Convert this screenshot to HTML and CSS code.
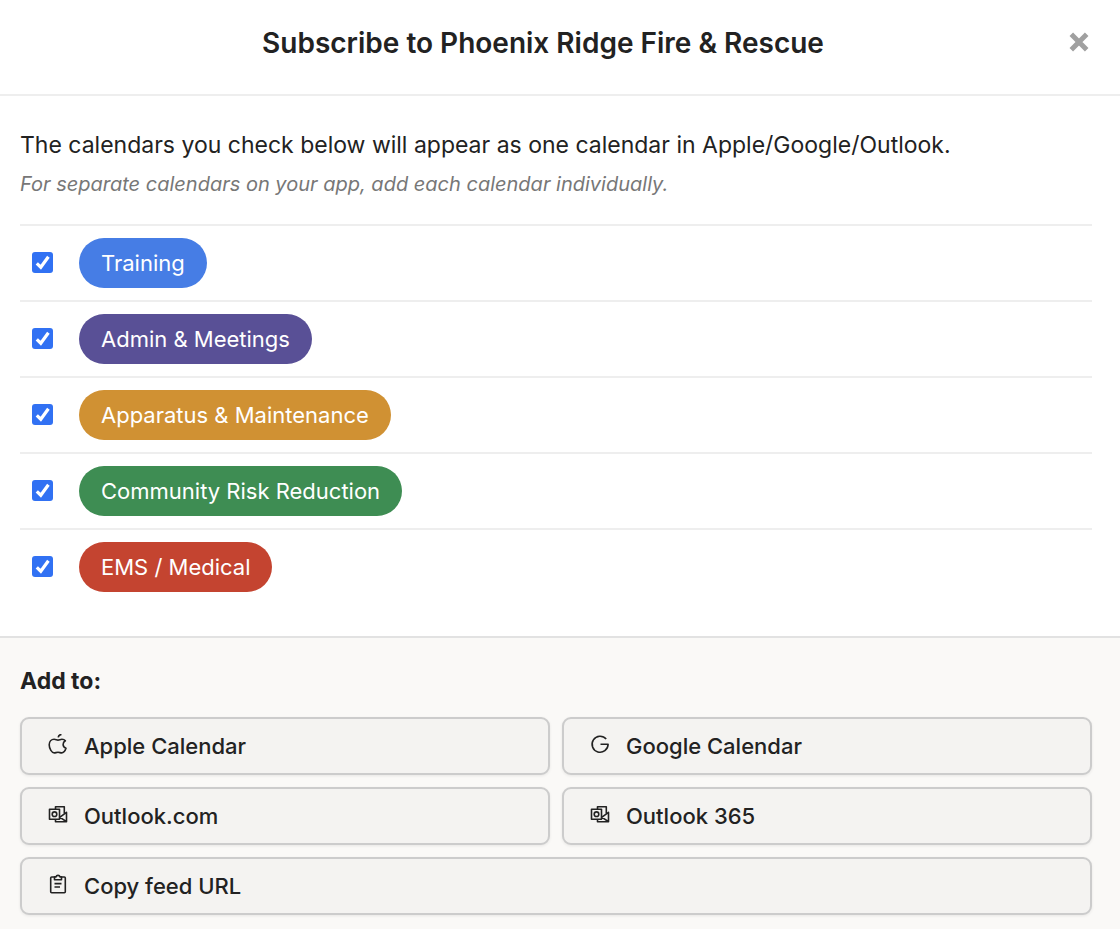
FILE: index.html
```html
<!DOCTYPE html>
<html lang="en">
<head>
    <meta charset="UTF-8">
    <meta name="viewport" content="width=device-width, initial-scale=1">
    <title>Subscribe to Phoenix Ridge Fire &amp; Rescue</title>
    <link rel="stylesheet" href="styles.css">
</head>
<body>
    <div class="dialog" role="dialog" aria-labelledby="dialog-title">
        <header class="dialog-header">
            <h1 class="dialog-title" id="dialog-title">Subscribe to Phoenix Ridge Fire &amp; Rescue</h1>
            <button class="close-button" type="button" aria-label="Close">
                <svg width="20" height="20" viewBox="0 0 20 20" fill="none" stroke="currentColor" stroke-width="5">
                    <path d="M2.3 2.3 17.7 17.7M17.7 2.3 2.3 17.7"/>
                </svg>
            </button>
        </header>

        <main class="dialog-body">
            <p class="intro">The calendars you check below will appear as one calendar in Apple/Google/Outlook.</p>
            <p class="hint">For separate calendars on your app, add each calendar individually.</p>

            <ul class="calendar-list">
                <li class="calendar-row">
                    <input class="calendar-check" type="checkbox" id="cal-training" checked>
                    <label class="pill training" for="cal-training">Training</label>
                </li>
                <li class="calendar-row">
                    <input class="calendar-check" type="checkbox" id="cal-admin" checked>
                    <label class="pill admin" for="cal-admin">Admin &amp; Meetings</label>
                </li>
                <li class="calendar-row">
                    <input class="calendar-check" type="checkbox" id="cal-apparatus" checked>
                    <label class="pill apparatus" for="cal-apparatus">Apparatus &amp; Maintenance</label>
                </li>
                <li class="calendar-row">
                    <input class="calendar-check" type="checkbox" id="cal-community" checked>
                    <label class="pill community" for="cal-community">Community Risk Reduction</label>
                </li>
                <li class="calendar-row">
                    <input class="calendar-check" type="checkbox" id="cal-ems" checked>
                    <label class="pill ems" for="cal-ems">EMS / Medical</label>
                </li>
            </ul>
        </main>

        <footer class="dialog-footer">
            <h2 class="footer-title">Add to:</h2>
            <div class="button-grid">
                <button class="add-button" type="button">
                    <svg class="icon" viewBox="0 0 20 20">
                        <path d="M10 6.100C8.600 6 7.700 5.200 6.100 5.200 3.400 5.200 1.200 7.400 1.200 10.800c0 4 2.700 8.100 5.100 8.100 1.300 0 2-.6 3.700-.6s2.300.6 3.600.6c1.900 0 3.700-2.500 4.400-4.600-1.900-.8-2.900-2.200-2.900-3.900 0-1.500.8-2.800 2.300-3.600-.9-1.100-2.200-1.600-3.500-1.600C12.400 5.200 11.400 6.100 10 6.100z"/>
                        <path d="M10.200 3.400C10.400 1.800 11.700.6 13.500.4"/>
                    </svg>
                    Apple Calendar
                </button>
                <button class="add-button" type="button">
                    <svg class="icon" viewBox="0 0 20 20">
                        <path d="M16.200 5.100A8 8 0 1 0 18.100 10.300H10.500"/>
                    </svg>
                    Google Calendar
                </button>
                <button class="add-button" type="button">
                    <svg class="icon" viewBox="0 0 20 20">
                        <path d="M1.500 5.200h10v10h-10zM7.500 5V2.700h8.800v6.500M7.500 15.400v2.300h11V8.400l-6.800 5M12 13.300l6.300 4.200"/>
                        <circle cx="6.500" cy="10.200" r="2.300"/>
                    </svg>
                    Outlook.com
                </button>
                <button class="add-button" type="button">
                    <svg class="icon" viewBox="0 0 20 20">
                        <path d="M1.500 5.200h10v10h-10zM7.500 5V2.700h8.800v6.500M7.500 15.400v2.300h11V8.400l-6.800 5M12 13.300l6.300 4.200"/>
                        <circle cx="6.500" cy="10.200" r="2.300"/>
                    </svg>
                    Outlook 365
                </button>
                <button class="add-button wide" type="button">
                    <svg class="icon" viewBox="0 0 20 20">
                        <path d="M6.500 3H3.700a1 1 0 0 0-1 1v13.800a1 1 0 0 0 1 1h12.600a1 1 0 0 0 1-1V4a1 1 0 0 0-1-1h-2.800"/>
                        <path d="M6.500 2.900h1.400a2.200 2.200 0 0 1 4.200 0h1.400v2.900h-7zM6.500 9.600h7M6.500 13h5.500"/>
                    </svg>
                    Copy feed URL
                </button>
            </div>
        </footer>
    </div>
</body>
</html>
```
FILE: styles.css
```css
* {
    box-sizing: border-box;
}

body {
    margin: 0;
    background: #faf9f7;
    color: #222;
    font-family: Inter, "Liberation Sans", sans-serif;
}

.dialog-header {
    display: flex;
    align-items: flex-start;
    padding: 26px 28px 34px 20px;
    background: #fff;
    border-bottom: 2px solid #eee;
}

.dialog-title {
    flex: 1;
    margin: 0;
    font-size: 28px;
    font-weight: 600;
    line-height: 34px;
    text-align: center;
}

.close-button {
    display: flex;
    padding: 6px 3px;
    border: 0;
    background: none;
    color: #a0a0a0;
    cursor: pointer;
}

.dialog-body {
    padding: 32px 28px 32px 20px;
    background: #fff;
}

.intro {
    margin: 0 0 8px;
    font-size: 23px;
    line-height: 34px;
}

.hint {
    margin: 0;
    color: #777;
    font-size: 20px;
    font-style: italic;
    line-height: 28px;
}

.calendar-list {
    margin: 26px 0 0;
    padding: 0;
    list-style: none;
}

.calendar-row {
    display: flex;
    align-items: center;
    gap: 26px;
    padding: 12px;
    border-top: 2px solid #eee;
}

.calendar-check {
    width: 21px;
    height: 21px;
    margin: 0 0 2px;
    appearance: none;
    border: 1px solid #999;
    border-radius: 3px;
    background: #fff;
}

.calendar-check:checked {
    border: 0;
    background: #3171f3 url("data:image/svg+xml,%3Csvg xmlns='http://www.w3.org/2000/svg' viewBox='0 0 21 21'%3E%3Cpath d='M4.800 11.300 8.800 15.200 16.400 4.800' fill='none' stroke='%23fff' stroke-width='3.200'/%3E%3C/svg%3E") center / contain;
}

.pill {
    padding: 10px 22px;
    border-radius: 25px;
    color: #fff;
    font-size: 22px;
    font-weight: 400;
    line-height: 30px;
}

.training {
    background: #467de5;
}

.admin {
    background: #595096;
}

.apparatus {
    background: #d09133;
}

.community {
    background: #3e8d53;
}

.ems {
    background: #c44430;
}

.dialog-footer {
    padding: 28px 28px 14px 20px;
    border-top: 2px solid #e2e2e2;
    background: #faf9f7;
}

.footer-title {
    margin: 0 0 21px;
    font-size: 23px;
    font-weight: 700;
    line-height: 30px;
}

.button-grid {
    display: grid;
    grid-template-columns: 1fr 1fr;
    gap: 12px;
}

.add-button {
    display: flex;
    align-items: center;
    gap: 16px;
    padding: 13px 26px;
    border: 2px solid #ccc;
    border-radius: 9px;
    background: #f4f3f1;
    box-shadow: 0 1px 3px rgba(0, 0, 0, 0.08);
    color: #222;
    font-family: inherit;
    font-size: 22px;
    font-weight: 500;
    line-height: 28px;
    cursor: pointer;
}

.wide {
    grid-column: 1 / -1;
}

.icon {
    width: 20px;
    height: 20px;
    margin-bottom: 4px;
    fill: none;
    stroke: #222;
    stroke-width: 1.6;
    stroke-linejoin: round;
}
```
